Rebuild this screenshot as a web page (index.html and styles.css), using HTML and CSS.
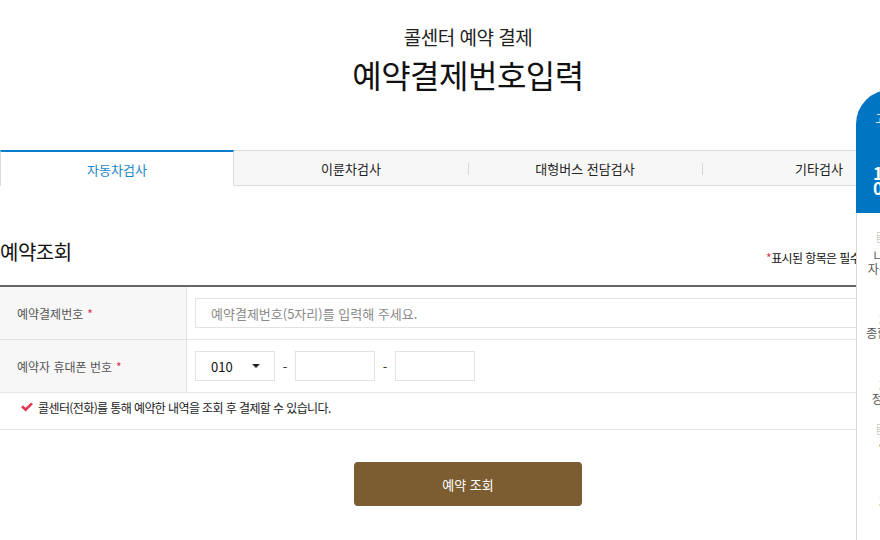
FILE: index.html
```html
<!DOCTYPE html>
<html lang="ko">
<head>
<meta charset="utf-8">
<title>콜센터 예약 결제</title>
<link rel="stylesheet" href="styles.css">
</head>
<body>
<div class="page">
  <header class="head">
    <p class="sub">콜센터 예약 결제</p>
    <h1 class="title">예약결제번호입력</h1>
  </header>

  <nav class="tabs">
    <a class="tab active">자동차검사</a>
    <a class="tab">이륜차검사</a>
    <a class="tab sep">대형버스 전담검사</a>
    <a class="tab sep">기타검사</a>
  </nav>

  <section class="section">
    <div class="sec-head">
      <h2 class="sec-title">예약조회</h2>
      <p class="req"><span class="star">*</span>표시된 항목은 필수입력사항입니다.</p>
    </div>

    <div class="form">
      <div class="row">
        <div class="label">예약결제번호 <span class="star">*</span></div>
        <div class="field">
          <input class="inp wide" type="text" placeholder="예약결제번호(5자리)를 입력해 주세요.">
        </div>
      </div>
      <div class="row">
        <div class="label">예약자 휴대폰 번호 <span class="star">*</span></div>
        <div class="field">
          <div class="select"><span>010</span><span class="caret"></span></div>
          <span class="dash">-</span>
          <input class="inp short" type="text">
          <span class="dash">-</span>
          <input class="inp short" type="text">
        </div>
      </div>
      <div class="note">
        <svg class="check" width="12" height="10" viewBox="0 0 12 10"><path d="M1 4.2 L4.6 7.6 L11 1.4" fill="none" stroke="#e8344e" stroke-width="2.6" stroke-linejoin="miter"/></svg>
        <span>콜센터(전화)를 통해 예약한 내역을 조회 후 결제할 수 있습니다.</span>
      </div>
    </div>

    <div class="btn-wrap">
      <button class="btn" type="button">예약 조회</button>
    </div>
  </section>
</div>

<aside class="quick">
  <div class="quick-top">
    <p class="q-t1">고객센터 안내</p>
    <p class="q-num">1577<br>0001</p>
  </div>
  <ul class="quick-list">
    <li class="i1"><span class="ico">▤</span>나의예약조회<br>자동차검사예약</li>
    <li class="i2">자동차검사<br>종합검사 대상자</li>
    <li class="i3 dot">·</li>
    <li class="i4">자동차검사<br>정비이력 조회</li>
    <li class="i5"><span class="ico">▤</span>일정 조회</li>
    <li class="i6">자동차검사</li>
    <li class="i7 dot">·</li>
  </ul>
</aside>
</body>
</html>
```

FILE: styles.css
```css
html, body {
  margin: 0;
  padding: 0;
  overflow: hidden;
  background: #fff;
}
body {
  font-family: "Noto Sans CJK KR", "Noto Sans", sans-serif;
  color: #222;
  width: 880px;
  height: 540px;
  position: relative;
}
.page {
  width: 936px;
}
.head {
  text-align: center;
  padding-top: 23px;
}
.sub {
  margin: 0;
  font-size: 19px;
  line-height: 28px;
  color: #222;
  letter-spacing: -0.5px;
}
.title {
  margin: 3px 0 0;
  font-size: 32px;
  line-height: 40px;
  font-weight: 400;
  color: #111;
  letter-spacing: -0.5px;
}
.tabs {
  margin-top: 56px;
  display: grid;
  grid-template-columns: repeat(4, 1fr);
  height: 36px;
}
.tab {
  position: relative;
  display: flex;
  align-items: center;
  justify-content: center;
  background: #f7f7f7;
  border-top: 1px solid #dcdcdc;
  border-bottom: 1px solid #dcdcdc;
  font-size: 13px;
  color: #222;
  box-sizing: border-box;
}
.tab.active {
  background: #fff;
  border-top: 2px solid #0a7cc9;
  border-bottom: none;
  border-left: 1px solid #dcdcdc;
  border-right: 1px solid #dcdcdc;
  color: #1a84c8;
}
.tab.sep::before {
  content: "";
  position: absolute;
  left: 0;
  top: 12px;
  height: 12px;
  border-left: 1px solid #d6d6d6;
}
.section {
  padding-top: 52px;
}
.sec-head {
  display: flex;
  justify-content: space-between;
  align-items: flex-end;
  height: 38px;
  padding-bottom: 9px;
}
.sec-title {
  margin: 0;
  font-size: 20px;
  font-weight: 400;
  line-height: 28px;
  color: #111;
  align-self: flex-start;
  letter-spacing: -0.5px;
}
.req {
  margin: 0 0 10px;
  font-size: 12px;
  color: #111;
  line-height: 16px;
  letter-spacing: -0.6px;
}
.star {
  color: #e2344e;
}
.form {
  border-top: 2px solid #666;
}
.row {
  display: grid;
  grid-template-columns: 187px 1fr;
  height: 52px;
  border-bottom: 1px solid #e5e5e5;
}
.label {
  background: #f7f7f7;
  border-right: 1px solid #e5e5e5;
  display: flex;
  align-items: center;
  gap: 4px;
  padding-left: 17px;
  font-size: 12px;
  color: #555;
}
.field {
  display: flex;
  align-items: center;
  padding: 0 8px;
}
.inp {
  box-sizing: border-box;
  height: 30px;
  border: 1px solid #e3e3e3;
  background: #fff;
  font-family: inherit;
  font-size: 13px;
  padding: 0 15px;
  outline: none;
}
.inp::placeholder {
  color: #8a8a8a;
}
.inp.wide {
  width: 100%;
}
.inp.short {
  width: 80px;
}
.select {
  box-sizing: border-box;
  width: 80px;
  height: 30px;
  border: 1px solid #e3e3e3;
  display: flex;
  align-items: center;
  justify-content: space-between;
  padding: 0 14px 0 15px;
  font-size: 13px;
  color: #111;
}
.caret {
  width: 0;
  height: 0;
  border-left: 4px solid transparent;
  border-right: 4px solid transparent;
  border-top: 4px solid #222;
}
.dash {
  width: 20px;
  text-align: center;
  font-size: 13px;
  color: #333;
}
.note {
  display: flex;
  align-items: center;
  gap: 5px;
  height: 37px;
  box-sizing: border-box;
  padding: 0 0 8px 21px;
  font-size: 12px;
  letter-spacing: -0.6px;
  color: #222;
  border-bottom: 1px solid #e5e5e5;
}
.check {
  display: block;
}
.btn-wrap {
  display: flex;
  justify-content: center;
  padding-top: 32px;
}
.btn {
  width: 228px;
  height: 44px;
  border: none;
  border-radius: 4px;
  background: #7c5d32;
  color: #fff;
  font-family: inherit;
  font-size: 13px;
  cursor: pointer;
}
.quick {
  position: absolute;
  left: 856px;
  top: 90px;
  width: 100px;
  text-align: center;
}
.quick-top {
  background: #0075c1;
  height: 123px;
  border-top-left-radius: 34px;
  color: #fff;
  padding-top: 20px;
  box-sizing: border-box;
}
.q-t1 {
  margin: 0;
  font-size: 12px;
  line-height: 17px;
  padding-left: 8px;
}
.q-num {
  margin: 38px 0 0;
  font-size: 17px;
  font-weight: 700;
  line-height: 15px;
  padding-right: 26px;
}
.quick-list {
  list-style: none;
  margin: 0;
  padding: 16px 0 0;
  font-size: 12px;
  color: #555;
  line-height: 13px;
  background: #fff;
  border-left: 1px solid #d8d8d8;
  height: 340px;
  box-sizing: border-box;
}
.quick-list .ico {
  display: block;
  color: #aaa;
  font-size: 11px;
  line-height: 16px;
  margin-bottom: 4px;
  padding-right: 50px;
}
.quick-list .i2 { margin-top: 38px; }
.quick-list .i3 { margin-top: 27px; }
.quick-list .i4 { margin-top: 0; }
.quick-list .i5 { margin-top: 16px; padding-right: 8px; }
.quick-list .i5 .ico { padding-right: 42px; }
.quick-list .i6 { margin-top: 41px; }
.quick-list .i7 { margin-top: 14px; }
.quick-list .dot {
  color: #999;
}
```
